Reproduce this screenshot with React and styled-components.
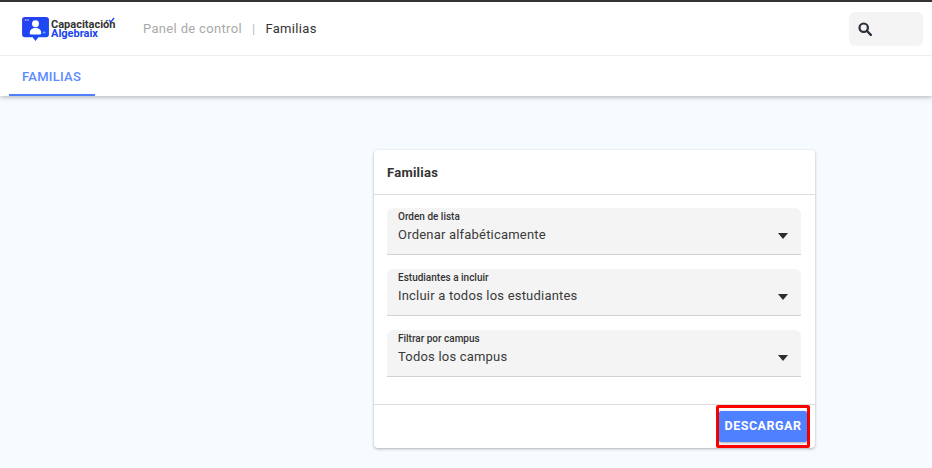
import React from "react"
import styled, { createGlobalStyle } from "styled-components"

const GlobalStyle = createGlobalStyle`
  html, body {
    margin: 0;
    height: 100%;
    overflow: hidden;
    background: #f6fbff;
    font-family: Roboto, "Liberation Sans", sans-serif;
  }
`

const Page = styled.div`
  width: 932px;
  height: 468px;
  overflow: hidden;
`

const TopArea = styled.div`
  background: #fff;
  border-top: 2px solid #333;
  box-shadow: 0 1px 5px rgba(0, 0, 0, 0.3);
  position: relative;
`

const Header = styled.header`
  height: 53px;
  display: flex;
  align-items: center;
  padding: 0 9px 0 22px;
  border-bottom: 1px solid #eee;
`

const Logo = styled.div`
  display: flex;
  align-items: center;
  width: 121px;
  gap: 2px;
  position: relative;
`

const LogoText = styled.div`
  display: flex;
  flex-direction: column;
  font-weight: 700;
  font-size: 11px;
  line-height: 9px;
  margin-top: 1px;
`

const LogoLine = styled.span`
  color: ${({ $blue }) => ($blue ? "#1a44f0" : "#333")};
`

const LogoCheck = styled.svg`
  position: absolute;
  left: 86px;
  top: 0;
`

const Crumbs = styled.div`
  display: flex;
  align-items: center;
  font-size: 13px;
  letter-spacing: 0.33px;
  flex: 1;
`

const Crumb = styled.span`
  color: ${({ $active }) => ($active ? "#333" : "#a9a9a9")};
`

const CrumbDivider = styled.span`
  color: #bbb;
  margin: 0 10px;
`

const SearchBox = styled.div`
  width: 74px;
  height: 34px;
  box-sizing: border-box;
  background: #f4f4f4;
  border-radius: 6px;
  display: flex;
  align-items: center;
  padding-left: 9px;
`

const Tabs = styled.nav`
  height: 40px;
  display: flex;
  padding-left: 9px;
`

const Tab = styled.div`
  width: 86px;
  box-sizing: border-box;
  padding-left: 13px;
  height: 40px;
  line-height: 41px;
  font-size: 13px;
  font-weight: 500;
  letter-spacing: 0.25px;
  color: #5c8bff;
  border-bottom: 2px solid #4f80ff;
`

const Main = styled.main`
  display: flex;
  padding: 54px 0 0 374px;
`

const Card = styled.section`
  width: 441px;
  height: 298px;
  background: #fff;
  border-radius: 4px;
  box-shadow: 0 1px 3px rgba(0, 0, 0, 0.3);
  display: flex;
  flex-direction: column;
`

const CardHeader = styled.h2`
  margin: 0;
  height: 45px;
  box-sizing: border-box;
  padding: 0 13px;
  display: flex;
  align-items: center;
  font-size: 13px;
  font-weight: 700;
  letter-spacing: 0.25px;
  color: #333;
  border-bottom: 1px solid #ddd;
`

const CardBody = styled.div`
  flex: 1;
  padding: 13px 14px 0 13px;
  display: flex;
  flex-direction: column;
  gap: 14px;
`

const Field = styled.div`
  height: 47px;
  box-sizing: border-box;
  background: #f4f4f4;
  border-radius: 6px 6px 0 0;
  border-bottom: 1px solid #d2d2d2;
  padding: 3px 10px 0 11px;
  position: relative;
`

const FieldLabel = styled.div`
  font-size: 10px;
  line-height: 11px;
  font-weight: 500;
  color: #333;
`

const FieldValue = styled.div`
  font-size: 13px;
  line-height: 16px;
  margin-top: 5px;
  letter-spacing: 0.2px;
  color: #3a3a3a;
`

const Caret = styled.span`
  position: absolute;
  right: 13px;
  top: 25px;
  width: 0;
  height: 0;
  border-left: 5.5px solid transparent;
  border-right: 5.5px solid transparent;
  border-top: 6px solid #2c2c2c;
`

const CardFooter = styled.div`
  height: 44px;
  box-sizing: border-box;
  border-top: 1px solid #ddd;
  display: flex;
  justify-content: flex-end;
  padding-right: 5px;
`

const DownloadFrame = styled.div`
  width: 94px;
  height: 43px;
  box-sizing: border-box;
  border: 3px solid #f00;
  border-radius: 2px;
  padding: 3px 1px 4px 0;
`

const DownloadButton = styled.button`
  width: 88px;
  height: 31px;
  padding: 0 0 2px;
  border: 0;
  background: #4f80ff;
  border-radius: 2px;
  box-shadow: 0 1px 3px rgba(0, 0, 0, 0.35);
  color: #fff;
  font-family: inherit;
  font-size: 12.5px;
  font-weight: 700;
  letter-spacing: 0.5px;
`

const LogoIcon = () => (
  <svg width="27" height="24" viewBox="0 0 28 25">
    <defs>
      <linearGradient id="logoBlue" x1="0" y1="0" x2="1" y2="1">
        <stop offset="0" stopColor="#2a3cf0" />
        <stop offset="1" stopColor="#1550f5" />
      </linearGradient>
    </defs>
    <path
      d="M3 0h22a3 3 0 0 1 3 3v15a3 3 0 0 1-3 3h-8l-3 4-3-4H3a3 3 0 0 1-3-3V3a3 3 0 0 1 3-3z"
      fill="url(#logoBlue)"
    />
    <circle cx="14" cy="7" r="3.6" fill="#fff" />
    <path d="M8 17c0-4 2.500-5.500 6-5.500s6 1.500 6 5.500c0 1-1 1.300-2 1.300h-8c-1 0-2-.3-2-1.300z" fill="#fff" />
    <rect x="3" y="2.500" width="1.400" height="1.400" fill="#cfe0ff" />
    <rect x="5.500" y="2.500" width="1.400" height="1.400" fill="#cfe0ff" />
    <path d="M21 17l2-2.500 2 2.500z" fill="#7fa6ff" />
  </svg>
)

const SearchIcon = () => (
  <svg width="14" height="14" viewBox="0 0 14 14" fill="none" stroke="#2b2f3a">
    <circle cx="5.700" cy="5.700" r="4.200" strokeWidth="2.200" />
    <path d="M9 9l3.800 3.800" strokeWidth="2.400" strokeLinecap="round" />
  </svg>
)

const fields = [
  { label: "Orden de lista", value: "Ordenar alfabéticamente" },
  { label: "Estudiantes a incluir", value: "Incluir a todos los estudiantes" },
  { label: "Filtrar por campus", value: "Todos los campus" },
]

const App = () => {
  return (
    <Page>
      <GlobalStyle />
      <TopArea>
        <Header>
          <Logo>
            <LogoIcon />
            <LogoText>
              <LogoLine>Capacitación</LogoLine>
              <LogoLine $blue>Algebraix</LogoLine>
            </LogoText>
            <LogoCheck width="7" height="6" viewBox="0 0 7 6" fill="none" stroke="#1a44f0" strokeWidth="1.300">
              <path d="M1 3l2 2 3-4" />
            </LogoCheck>
          </Logo>
          <Crumbs>
            <Crumb>Panel de control</Crumb>
            <CrumbDivider>|</CrumbDivider>
            <Crumb $active>Familias</Crumb>
          </Crumbs>
          <SearchBox>
            <SearchIcon />
          </SearchBox>
        </Header>
        <Tabs>
          <Tab>FAMILIAS</Tab>
        </Tabs>
      </TopArea>
      <Main>
        <Card>
          <CardHeader>Familias</CardHeader>
          <CardBody>
            {fields.map(field => (
              <Field key={field.label}>
                <FieldLabel>{field.label}</FieldLabel>
                <FieldValue>{field.value}</FieldValue>
                <Caret />
              </Field>
            ))}
          </CardBody>
          <CardFooter>
            <DownloadFrame>
              <DownloadButton>DESCARGAR</DownloadButton>
            </DownloadFrame>
          </CardFooter>
        </Card>
      </Main>
    </Page>
  )
}

export default App
